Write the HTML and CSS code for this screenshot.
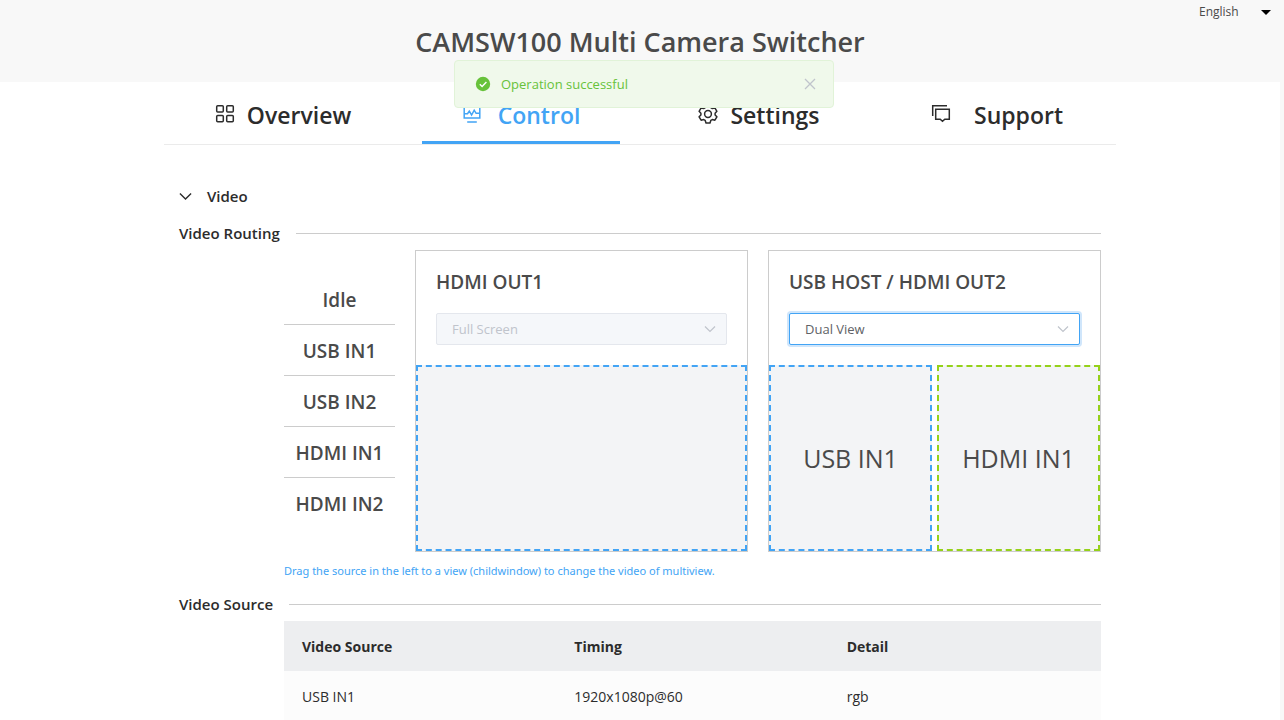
FILE: index.html
```html
<!DOCTYPE html>
<html lang="en">
<head>
<meta charset="utf-8">
<title>CAMSW100 Multi Camera Switcher</title>
<link rel="stylesheet" href="styles.css">
</head>
<body>
<div class="page">
  <header class="header">
    <div class="language">
      <select class="language-select" aria-label="Language"><option>English</option></select>
      <svg class="caret" viewBox="0 0 10 5" aria-hidden="true"><path d="M0 0h10L5 5z"/></svg>
    </div>
    <h1 class="title">CAMSW100 Multi Camera Switcher</h1>
  </header>

  <main class="main">
    <nav class="tabs">
      <a class="tab" href="#overview">
        <svg class="tab-icon" viewBox="0 0 20 20" aria-hidden="true"><rect x="1.7" y="1.7" width="6.6" height="6.4" rx="1"/><rect x="11.7" y="1.7" width="6.6" height="6.4" rx="1"/><rect x="1.7" y="11.4" width="6.6" height="6.4" rx="1"/><rect x="11.7" y="11.4" width="6.6" height="6.4" rx="1"/></svg>
        <span>Overview</span>
      </a>
      <a class="tab tab-active" href="#control">
        <svg class="tab-icon" viewBox="0 0 20 20" aria-hidden="true"><path d="M2.2 1.7h15.6v12.3H2.2zM2.2 9.8h3.3l1.8-2.6 2.3 3.8 2.6-4.8 1.9 3.1h3.700M5.200 17.900h9.600"/></svg>
        <span>Control</span>
      </a>
      <a class="tab" href="#settings">
        <svg class="tab-icon" viewBox="0 0 20 20" aria-hidden="true"><path d="M8 1.200h4l.8 2.500 1.500.8 2.600-.6 2 3.400-1.800 1.900v1.700l1.800 1.900-2 3.400-2.600-.6-1.500.8-.8 2.500H8l-.8-2.500-1.500-.8-2.600.6-2-3.400 1.800-1.900V9.200L1.100 7.300l2-3.400 2.600.6 1.500-.8z" stroke-linejoin="round"/><circle cx="10" cy="10" r="3.400"/></svg>
        <span>Settings</span>
      </a>
      <a class="tab tab-wide" href="#support">
        <svg class="tab-icon" viewBox="0 0 20 20" aria-hidden="true"><path d="M1.700 12V1.700h14.300M4.700 5.200h13.600v10h-4.500l-2.300 2.100-2.300-2.100H4.700z"/></svg>
        <span>Support</span>
      </a>
    </nav>

    <div class="content">
      <button class="collapse" type="button">
        <svg class="chevron chevron-dark" viewBox="0 0 14 14" aria-hidden="true"><path d="M1 4.200l6 6 6-6"/></svg>
        <span>Video</span>
      </button>

      <section>
        <h2 class="section-title">Video Routing</h2>
        <div class="section-body routing">
          <ul class="sources">
            <li class="source">Idle</li>
            <li class="source">USB IN1</li>
            <li class="source">USB IN2</li>
            <li class="source">HDMI IN1</li>
            <li class="source">HDMI IN2</li>
          </ul>
          <div class="output">
            <div class="output-head">
              <label class="output-title" for="out1">HDMI OUT1</label>
              <div class="select-wrap">
                <select class="select" id="out1" disabled><option>Full Screen</option></select>
                <svg class="chevron select-arrow" viewBox="0 0 14 14" aria-hidden="true"><path d="M2 4.500l5 5 5-5"/></svg>
              </div>
            </div>
            <div class="views">
              <div class="view"></div>
            </div>
          </div>
          <div class="output">
            <div class="output-head">
              <label class="output-title" for="out2">USB HOST / HDMI OUT2</label>
              <div class="select-wrap">
                <select class="select select-focus" id="out2"><option>Dual View</option></select>
                <svg class="chevron select-arrow" viewBox="0 0 14 14" aria-hidden="true"><path d="M2 4.500l5 5 5-5"/></svg>
              </div>
            </div>
            <div class="views">
              <div class="view">USB IN1</div>
              <div class="view view-green">HDMI IN1</div>
            </div>
          </div>
        </div>
        <p class="section-body hint">Drag the source in the left to a view (childwindow) to change the video of multiview.</p>
      </section>

      <section>
        <h2 class="section-title">Video Source</h2>
        <div class="section-body">
          <table class="table">
            <thead><tr><th>Video Source</th><th>Timing</th><th>Detail</th></tr></thead>
            <tbody><tr><td>USB IN1</td><td>1920x1080p@60</td><td>rgb</td></tr></tbody>
          </table>
        </div>
      </section>
    </div>
  </main>
</div>

<div class="toast" role="alert">
  <svg class="toast-icon" viewBox="0 0 16 16" aria-hidden="true"><circle cx="8" cy="8" r="7.200"/><path d="M4.800 8.200l2.300 2.300 4.300-4.400"/></svg>
  <span class="toast-text">Operation successful</span>
  <button class="toast-close" type="button" aria-label="Close"><svg viewBox="0 0 12 12" aria-hidden="true"><path d="M1 1l10 10M11 1L1 11"/></svg></button>
</div>
</body>
</html>
```
FILE: styles.css
```css
* {
  box-sizing: border-box;
}

html {
  overflow: hidden;
}

body {
  margin: 0;
  background: #f8f8f8;
  color: #2c2c2c;
  font-family: "Open Sans", "Noto Sans", sans-serif;
  font-size: 14px;
}

.page {
  margin-right: 4px;
  background: #fff;
}

.header {
  position: relative;
  display: flex;
  justify-content: center;
  align-items: center;
  height: 82px;
  padding-top: 2px;
  background: #f8f8f8;
}

.title {
  margin: 0;
  color: #4a4a4a;
  font-size: 27px;
  font-weight: 600;
  line-height: 36px;
}

.language {
  position: absolute;
  top: 2px;
  right: 9px;
  display: flex;
  align-items: center;
  gap: 22px;
}

.language-select {
  padding: 0;
  border: 0;
  background: transparent;
  color: #4a4a4a;
  font: 12px/20px "Open Sans", "Noto Sans", sans-serif;
  appearance: none;
}

.caret {
  width: 10px;
  height: 5px;
}

.main {
  max-width: 952px;
  margin: 0 auto;
}

.tabs {
  display: grid;
  grid-template-columns: repeat(4, 1fr);
  height: 63px;
  border-bottom: 1px solid #ebebeb;
}

.tab {
  display: flex;
  justify-content: center;
  align-items: center;
  gap: 12px;
  margin: 0 20px;
  padding-top: 7px;
  border-bottom: 3px solid transparent;
  color: #2c2c2c;
  font-size: 23px;
  font-weight: 600;
  text-decoration: none;
}

.tab-active {
  gap: 16px;
  border-color: #42a4f5;
  color: #42a4f5;
}

.tab-wide {
  gap: 23px;
}

.tab-icon {
  width: 20px;
  height: 20px;
  margin-bottom: 3px;
  fill: none;
  stroke: currentColor;
  stroke-width: 1.5;
}

.content {
  padding: 38px 15px 0;
}

.collapse {
  display: flex;
  align-items: center;
  gap: 15px;
  height: 26px;
  padding: 0;
  border: 0;
  background: none;
  color: #2c2c2c;
  font: 600 15px/24px "Open Sans", "Noto Sans", sans-serif;
}

.chevron {
  width: 14px;
  height: 14px;
  fill: none;
  stroke: #c0c4cc;
  stroke-width: 1.2;
}

.chevron-dark {
  width: 13px;
  stroke: #2c2c2c;
  stroke-width: 1.5;
}

.section-title {
  display: flex;
  align-items: center;
  gap: 16px;
  margin: 0;
  padding-top: 12px;
  font-size: 15px;
  font-weight: 600;
  line-height: 24px;
}

.section-title::after {
  flex: 1;
  height: 1px;
  background: #ccc;
  content: "";
}

.section-body {
  margin: 5px 0 0 105px;
}

.routing {
  display: grid;
  grid-template-columns: 111px 1fr 1fr;
  gap: 20px;
}

.sources {
  margin: 0;
  padding: 24px 0 0;
  list-style: none;
}

.source {
  height: 51px;
  border-bottom: 1px solid #ccc;
  color: #4a4a4a;
  font-size: 19px;
  font-weight: 600;
  line-height: 52px;
  text-align: center;
}

.source:last-child {
  border-bottom: 0;
}

.output {
  border: 1px solid #ccc;
}

.output-head {
  padding: 16px 20px 20px;
}

.output-title {
  display: block;
  margin-bottom: 16px;
  color: #4a4a4a;
  font-size: 19px;
  font-weight: 600;
  line-height: 30px;
}

.select-wrap {
  position: relative;
}

.select {
  display: block;
  width: 100%;
  height: 32px;
  padding: 0 15px;
  border: 1px solid #e4e7ed;
  border-radius: 2px;
  outline: 0;
  background: #fff;
  color: #606266;
  font: 13px "Open Sans", "Noto Sans", sans-serif;
  appearance: none;
}

.select:disabled {
  background: #f5f7fa;
  color: #c0c4cc;
  opacity: 1;
}

.select-focus {
  border-color: #42a4f5;
  box-shadow: 0 0 0 2px #d0e6fb;
}

.select-arrow {
  position: absolute;
  top: 9px;
  right: 10px;
}

.views {
  display: flex;
  gap: 5px;
  height: 186px;
}

.view {
  display: flex;
  flex: 1;
  justify-content: center;
  align-items: center;
  border: 2px dashed #42a4f5;
  background: #f3f4f6;
  color: #4a4a4a;
  font-size: 25px;
}

.view-green {
  border-color: #95d119;
}

.hint {
  margin-top: 10px;
  color: #42a4f5;
  font-family: "Noto Sans", sans-serif;
  font-size: 11px;
  line-height: 18px;
}

.table {
  width: 100%;
  border-spacing: 0;
  table-layout: fixed;
  background: #fcfcfc;
  text-align: left;
}

.table th,
.table td {
  height: 50px;
  padding: 0 18px;
}

.table th {
  background: #edeef0;
  font-weight: 700;
}

.toast {
  position: absolute;
  top: 60px;
  left: calc(50% - 188px);
  display: flex;
  align-items: center;
  width: 380px;
  height: 48px;
  padding: 0 17px 0 20px;
  border: 1px solid #e1f3d8;
  border-radius: 4px;
  background: #f0f9eb;
  color: #67c23a;
}

.toast-icon {
  width: 16px;
  height: 16px;
  margin-right: 10px;
  fill: #67c23a;
}

.toast-icon path {
  fill: none;
  stroke: #fff;
  stroke-width: 1.4;
}

.toast-text {
  flex: 1;
  font-size: 13px;
}

.toast-close {
  display: flex;
  padding: 0;
  border: 0;
  background: none;
}

.toast-close svg {
  width: 12px;
  height: 12px;
  stroke: #c0c4cc;
  stroke-width: 1.3;
}
```
